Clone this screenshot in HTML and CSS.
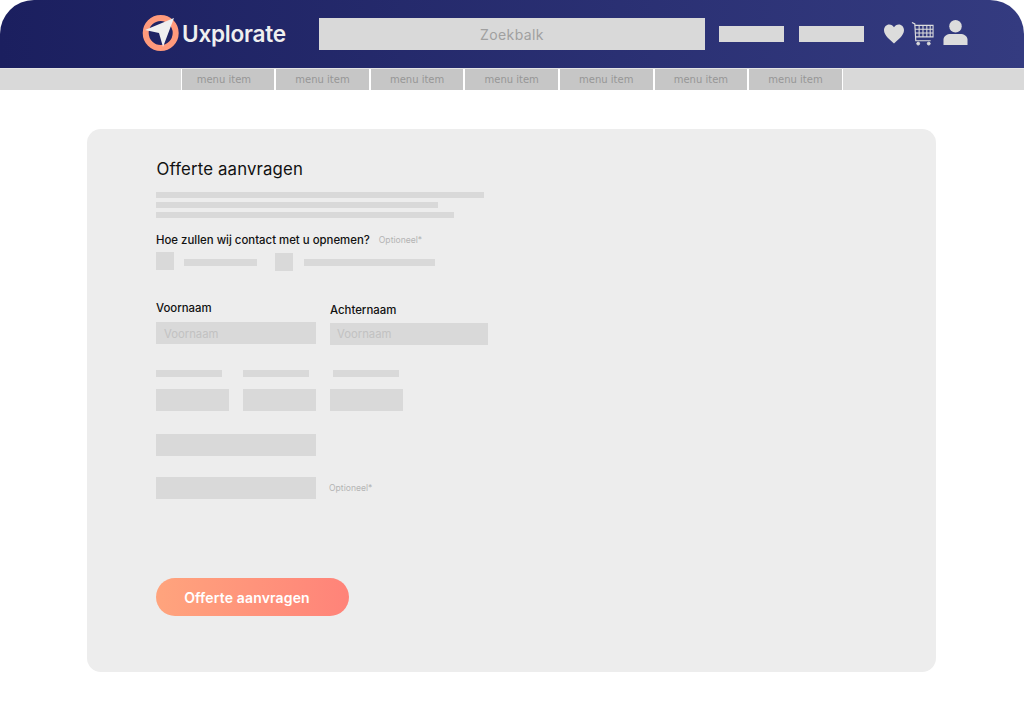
FILE: index.html
```html
<!DOCTYPE html>
<html lang="en">
	<head>
		<meta charset="UTF-8" />
		<meta name="viewport" content="width=device-width, initial-scale=1.0" />
		<title>Offerte aanvragen</title>
		<link rel="stylesheet" href="styles.css">
	</head>
	<body>
		<header class="topbar">
			<div class="logo">
				<svg class="logo-mark" width="40" height="40" viewBox="0 0 40 40">
					<circle cx="19.7" cy="20" r="15" fill="none" stroke="#ff9a7c" stroke-width="6" />
					<path d="M33 5 L4 17 L18 20 L22 34 Z" fill="#efefef" />
				</svg>
				<span class="logo-text">Uxplorate</span>
			</div>
			<div class="search">Zoekbalk</div>
			<div class="top-btn"></div>
			<div class="top-btn"></div>
			<div class="top-icons">
				<svg class="icon-heart" width="20" height="20" viewBox="0 0 21 20">
					<path d="M10.5 20 C7 16.5 0 11.5 0 6 C0 2.5 2.5 0 5.5 0 C7.7 0 9.5 1.2 10.5 3 C11.5 1.2 13.3 0 15.5 0 C18.5 0 21 2.5 21 6 C21 11.5 14 16.5 10.5 20 Z" fill="#dcdcdc" />
				</svg>
				<svg class="icon-cart" width="23" height="24" viewBox="0 0 23 25" fill="none" stroke="#dcdcdc">
					<path d="M0.5 0.5 L3.5 2 L4.5 19.5 H20" stroke-width="1.2" />
					<path d="M3.5 3.5 H22.5 V15.5 H4.2 M8 3.5 V15.5 M12 3.5 V15.5 M16 3.5 V15.5 M19.5 3.5 V15.5 M3.7 7.5 H22.5 M3.9 11.5 H22.5" stroke-width="1.1" />
					<circle cx="7" cy="22.5" r="1.5" fill="#dcdcdc" />
					<circle cx="18" cy="22.5" r="1.5" fill="#dcdcdc" />
				</svg>
				<svg class="icon-user" width="25" height="25" viewBox="0 0 25 26" fill="#dcdcdc">
					<circle cx="12.5" cy="6.5" r="6.5" />
					<path d="M0 26 V20.5 C0 16.5 4 14.5 7.5 14.5 H17.5 C21 14.5 25 16.5 25 20.5 V26 Z" />
				</svg>
			</div>
		</header>

		<nav class="subnav">
			<a class="menu-item">menu item</a>
			<a class="menu-item">menu item</a>
			<a class="menu-item">menu item</a>
			<a class="menu-item">menu item</a>
			<a class="menu-item">menu item</a>
			<a class="menu-item">menu item</a>
			<a class="menu-item">menu item</a>
		</nav>

		<main class="card">
			<h1 class="card-title">Offerte aanvragen</h1>

			<div class="intro">
				<div class="line line-a"></div>
				<div class="line line-b"></div>
				<div class="line line-c"></div>
			</div>

			<div class="question">
				<span class="label">Hoe zullen wij contact met u opnemen?</span>
				<span class="optional">Optioneel*</span>
			</div>

			<div class="choices">
				<div class="check"></div>
				<div class="line choice-a"></div>
				<div class="check check-low"></div>
				<div class="line choice-b"></div>
			</div>

			<div class="names">
				<div class="field field-first">
					<span class="label">Voornaam</span>
					<div class="input">Voornaam</div>
				</div>
				<div class="field field-last">
					<span class="label">Achternaam</span>
					<div class="input input-last">Voornaam</div>
				</div>
			</div>

			<div class="triple-labels">
				<div class="line small-label"></div>
				<div class="line small-label"></div>
				<div class="line small-label"></div>
			</div>
			<div class="triple-inputs">
				<div class="input"></div>
				<div class="input"></div>
				<div class="input"></div>
			</div>

			<div class="input wide street"></div>
			<div class="row-optional">
				<div class="input wide"></div>
				<span class="optional">Optioneel*</span>
			</div>

			<button class="submit">Offerte aanvragen</button>
		</main>
	</body>
</html>
```

FILE: styles.css
```css
* {
	box-sizing: border-box;
}
body {
	margin: 0;
	background-color: #fff;
	font-family: Inter, 'Liberation Sans', sans-serif;
	color: #111;
	overflow: hidden;
}
.topbar {
	height: 68px;
	display: flex;
	align-items: center;
	padding-left: 141px;
	border-radius: 34px 34px 0 0;
	background: linear-gradient(90deg, #1b1f5f, #343b80);
}
.logo {
	width: 178px;
	display: flex;
	align-items: center;
	margin-top: -2px;
}
.logo-mark {
	margin-right: 1px;
}
.logo-text {
	font-size: 22.6px;
	font-weight: 600;
	color: #efefef;
	letter-spacing: -0.25px;
}
.search {
	width: 386px;
	height: 32px;
	margin-right: 14px;
	background-color: #d9d9d9;
	color: #a0a0a0;
	font-size: 14px;
	line-height: 33px;
	text-align: center;
	letter-spacing: 0.4px;
}
.top-btn {
	width: 65px;
	height: 16px;
	margin-right: 15px;
	background-color: #d9d9d9;
}
.top-icons {
	display: flex;
	align-items: center;
	margin-left: 5px;
}
.icon-cart {
	margin-left: 7px;
	margin-top: -1px;
}
.icon-user {
	margin-left: 9px;
	margin-top: -3px;
}
.subnav {
	height: 22px;
	display: flex;
	padding-left: 180.6px;
	background-color: #d9d9d9;
	border-top: 1px solid #e4e4e4;
}
.menu-item {
	width: 94.6px;
	height: 21px;
	border-left: 1px solid #fff;
	border-right: 1px solid #fff;
	background-color: #c6c6c6;
	color: #969696;
	font-family: 'DejaVu Sans', sans-serif;
	font-size: 10px;
	line-height: 21px;
	text-align: center;
}
.menu-item:first-child {
	padding-right: 8px;
}
.card {
	width: 849px;
	height: 543px;
	margin: 39px 0 0 87px;
	padding: 30px 0 0 69px;
	border-radius: 14px;
	background-color: #ededed;
}
.card-title {
	margin: 0 0 0 0.5px;
	font-size: 16.8px;
	font-weight: 400;
	line-height: 20px;
	letter-spacing: 0.15px;
}
.line {
	background-color: #d9d9d9;
}
.intro {
	display: flex;
	flex-direction: column;
	gap: 4px;
	margin-top: 13px;
}
.line-a,
.line-b,
.line-c {
	height: 6px;
}
.line-a {
	width: 328px;
}
.line-b {
	width: 282px;
}
.line-c {
	width: 298px;
}
.label {
	font-size: 11.4px;
	font-weight: 500;
	line-height: 14px;
}
.optional {
	color: #b4b4b4;
	font-size: 8.6px;
}
.question {
	display: flex;
	align-items: center;
	gap: 9px;
	margin-top: 15px;
	height: 14px;
}
.choices {
	display: flex;
	align-items: center;
	height: 20px;
	margin-top: 5px;
}
.check {
	width: 18px;
	height: 18px;
	margin-top: -2px;
	background-color: #d9d9d9;
}
.check-low {
	margin-top: 0;
}
.choices .line {
	height: 7px;
}
.choice-a {
	width: 73px;
	margin: 0 18px 0 10px;
}
.choice-b {
	width: 131px;
	margin-left: 11px;
}
.names {
	display: flex;
	align-items: flex-start;
	margin-top: 29px;
}
.field {
	display: flex;
	flex-direction: column;
	gap: 7px;
}
.field-first {
	width: 174px;
}
.field-last {
	margin-top: 2px;
	gap: 6px;
}
.input {
	width: 160px;
	height: 22px;
	padding-left: 8px;
	background-color: #d9d9d9;
	color: #c2c2c2;
	font-size: 11.3px;
	line-height: 24px;
}
.input-last {
	width: 158px;
	padding-left: 7px;
	line-height: 22px;
}
.triple-labels {
	display: flex;
	margin-top: 25px;
}
.small-label {
	width: 66px;
	height: 7px;
	margin-right: 21px;
}
.small-label:last-child {
	margin-left: 3px;
}
.triple-inputs {
	display: flex;
	gap: 14px;
	margin-top: 12px;
}
.triple-inputs .input {
	width: 73px;
	padding: 0;
}
.wide {
	padding: 0;
}
.street {
	margin-top: 23px;
}
.row-optional {
	display: flex;
	align-items: center;
	gap: 13px;
	margin-top: 21px;
}
.submit {
	display: block;
	width: 193px;
	height: 38px;
	margin-top: 79px;
	padding: 0 11px 0 0;
	border: none;
	border-radius: 19px;
	background: linear-gradient(90deg, #ffa47d, #ff8379);
	color: #fff;
	font-family: Inter, 'Liberation Sans', sans-serif;
	font-size: 14px;
	font-weight: 600;
	letter-spacing: 0.15px;
}
```
